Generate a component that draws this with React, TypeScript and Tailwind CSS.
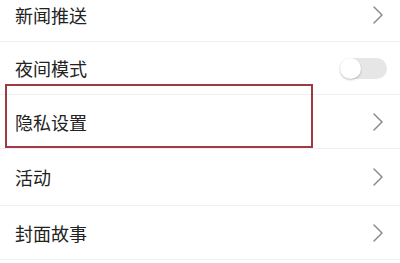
import React from "react";

function Chevron() {
  return (
    <svg width="12" height="20" viewBox="0 0 12 20" className="mr-[16px]">
      <path d="M2 2 L10 10 L2 18" fill="none" stroke="#8a8a8a" strokeWidth="1.5" strokeLinecap="round" strokeLinejoin="round" />
    </svg>
  );
}

function Toggle() {
  return (
    <div className="mr-[13px] w-[47px] h-[21px] rounded-full bg-[#e6e6e6] relative">
      <div className="absolute left-0 top-0 w-[21px] h-[21px] rounded-full bg-white shadow-[0_1px_2px_rgba(0,0,0,0.25)]" />
    </div>
  );
}

const rows: { label: string; h: string; toggle?: boolean }[] = [
  { label: "新闻推送", h: "h-[54px]" },
  { label: "夜间模式", h: "h-[53px]", toggle: true },
  { label: "隐私设置", h: "h-[54px]" },
  { label: "活动", h: "h-[57px]" },
  { label: "封面故事", h: "h-[54px]" },
];

export default function App() {
  return (
    <div className="w-[400px] h-[263px] overflow-hidden bg-white" style={{ fontFamily: '"Noto Sans CJK SC", "Noto Sans", sans-serif' }}>
      <div className="relative -mt-[12px]">
        {rows.map((r) => (
          <div key={r.label} className={`${r.h} flex items-center justify-between border-b border-[#f0f0f0]`}>
            <span className="pl-[15px] text-[18px] text-[#222] leading-none">{r.label}</span>
            {r.toggle ? <Toggle /> : <Chevron />}
          </div>
        ))}
        <div className="absolute left-[5px] top-[96px] w-[308px] h-[64px] border-2 border-[#9e3a44]" />
      </div>
    </div>
  );
}
